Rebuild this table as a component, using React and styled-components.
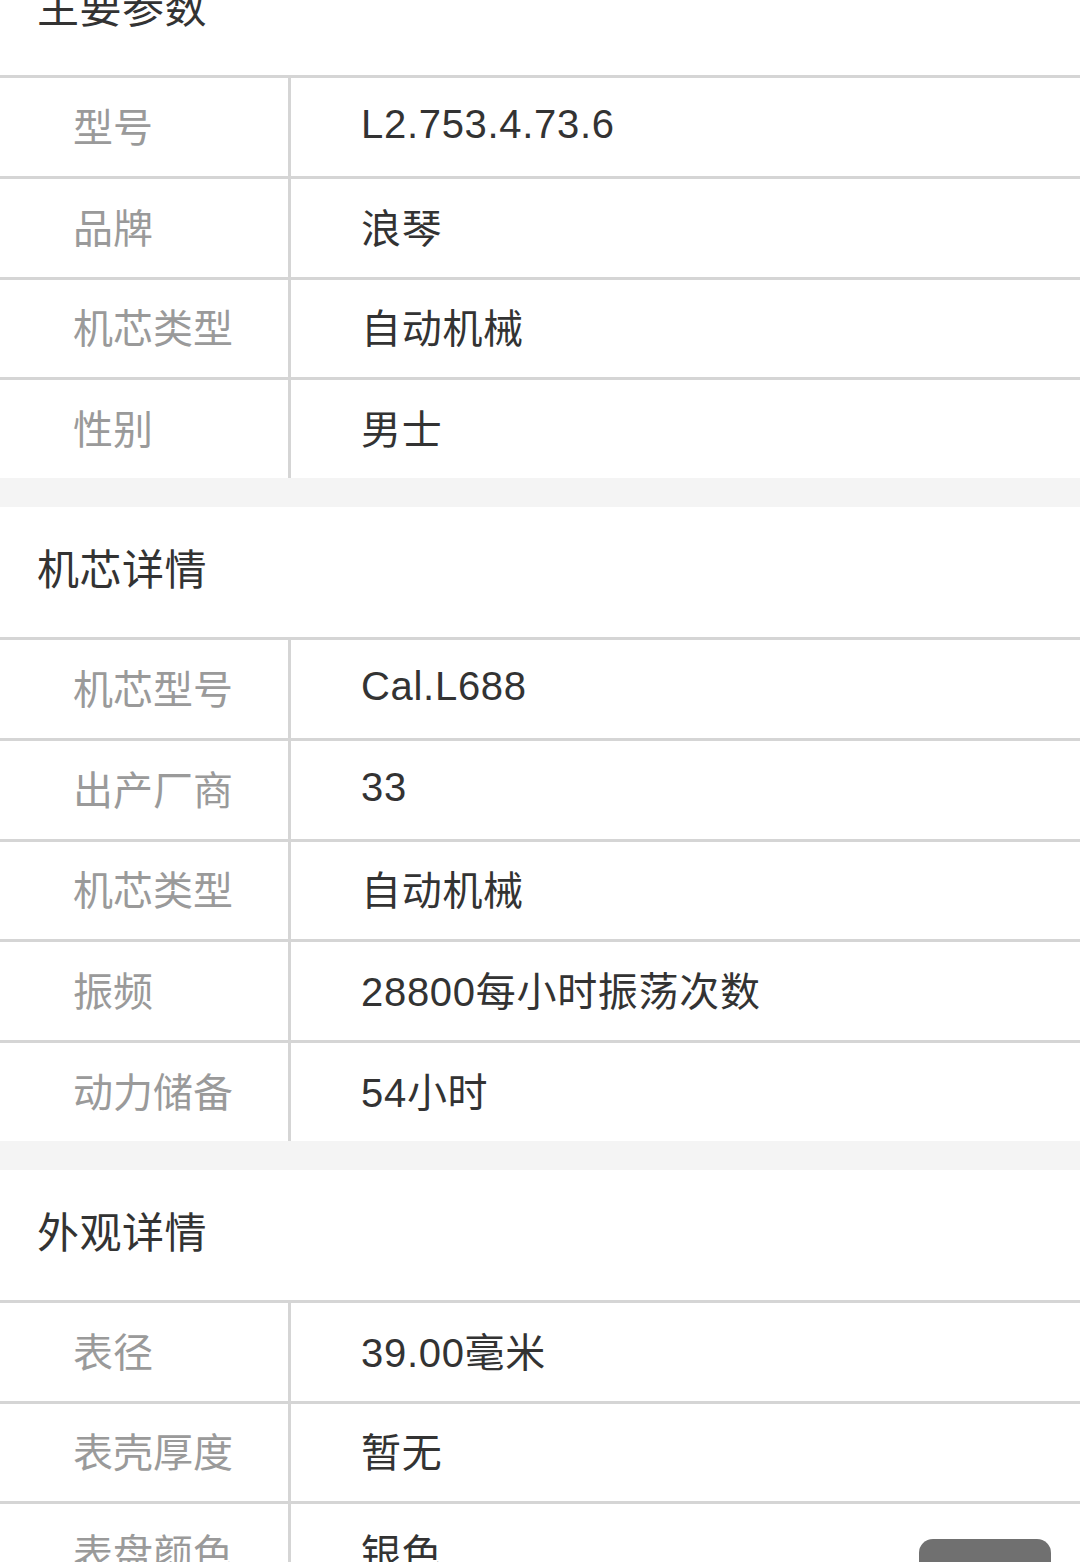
import React from "react";
import styled, { createGlobalStyle } from "styled-components";

const Global = createGlobalStyle`
  html, body { margin: 0; padding: 0; background: #ffffff; }
  body {
    font-family: "Liberation Sans", "Noto Sans CJK SC", sans-serif;
    -webkit-font-smoothing: antialiased;
  }
  * { box-sizing: border-box; }
`;

const Page = styled.div`
  width: 1080px;
  margin-top: -55px;
  display: flex;
  flex-direction: column;
`;

const Section = styled.section`
  display: flex;
  flex-direction: column;
  background: #ffffff;
`;

const Gap = styled.div`
  height: 29px;
  background: #f4f4f4;
`;

const Heading = styled.h2`
  margin: 0;
  height: 130px;
  display: flex;
  align-items: center;
  padding-left: 37px;
  padding-bottom: 11px;
  font-size: 42px;
  font-weight: 400;
  letter-spacing: 0.5px;
  color: #333333;
  font-family: "Liberation Sans", "Noto Sans CJK SC", sans-serif;
`;

const Row = styled.div`
  display: grid;
  grid-template-columns: 291px 1fr;
  height: 100.75px;
  border-top: 3px solid #d5d5d5;
`;

const Label = styled.div`
  display: flex;
  align-items: center;
  padding-left: 73px;
  padding-bottom: 4px;
  border-right: 3px solid #d5d5d5;
  font-size: 40px;
  color: #9a9a9a;
`;

const Value = styled.div`
  display: flex;
  align-items: center;
  padding-left: 70px;
  padding-bottom: 4px;
  font-size: 40px;
  letter-spacing: 0.7px;
  color: #333333;
`;

const FloatButton = styled.div`
  position: fixed;
  left: 919px;
  bottom: -30px;
  width: 132px;
  height: 53px;
  border-radius: 14px;
  background: #707070;
`;

const sections = [
  {
    title: "主要参数",
    rows: [
      ["型号", "L2.753.4.73.6"],
      ["品牌", "浪琴"],
      ["机芯类型", "自动机械"],
      ["性别", "男士"],
    ],
  },
  {
    title: "机芯详情",
    rows: [
      ["机芯型号", "Cal.L688"],
      ["出产厂商", "33"],
      ["机芯类型", "自动机械"],
      ["振频", "28800每小时振荡次数"],
      ["动力储备", "54小时"],
    ],
  },
  {
    title: "外观详情",
    rows: [
      ["表径", "39.00毫米"],
      ["表壳厚度", "暂无"],
      ["表盘颜色", "银色"],
      ["表盘材质", "暂无"],
    ],
  },
];

export default function App() {
  return (
    <>
      <Global />
      <Page>
        {sections.map((s, i) => (
          <React.Fragment key={s.title}>
            {i > 0 && <Gap />}
            <Section>
              <Heading>{s.title}</Heading>
              {s.rows.map(([k, v]) => (
                <Row key={k}>
                  <Label>{k}</Label>
                  <Value>{v}</Value>
                </Row>
              ))}
            </Section>
          </React.Fragment>
        ))}
      </Page>
      <FloatButton />
    </>
  );
}
